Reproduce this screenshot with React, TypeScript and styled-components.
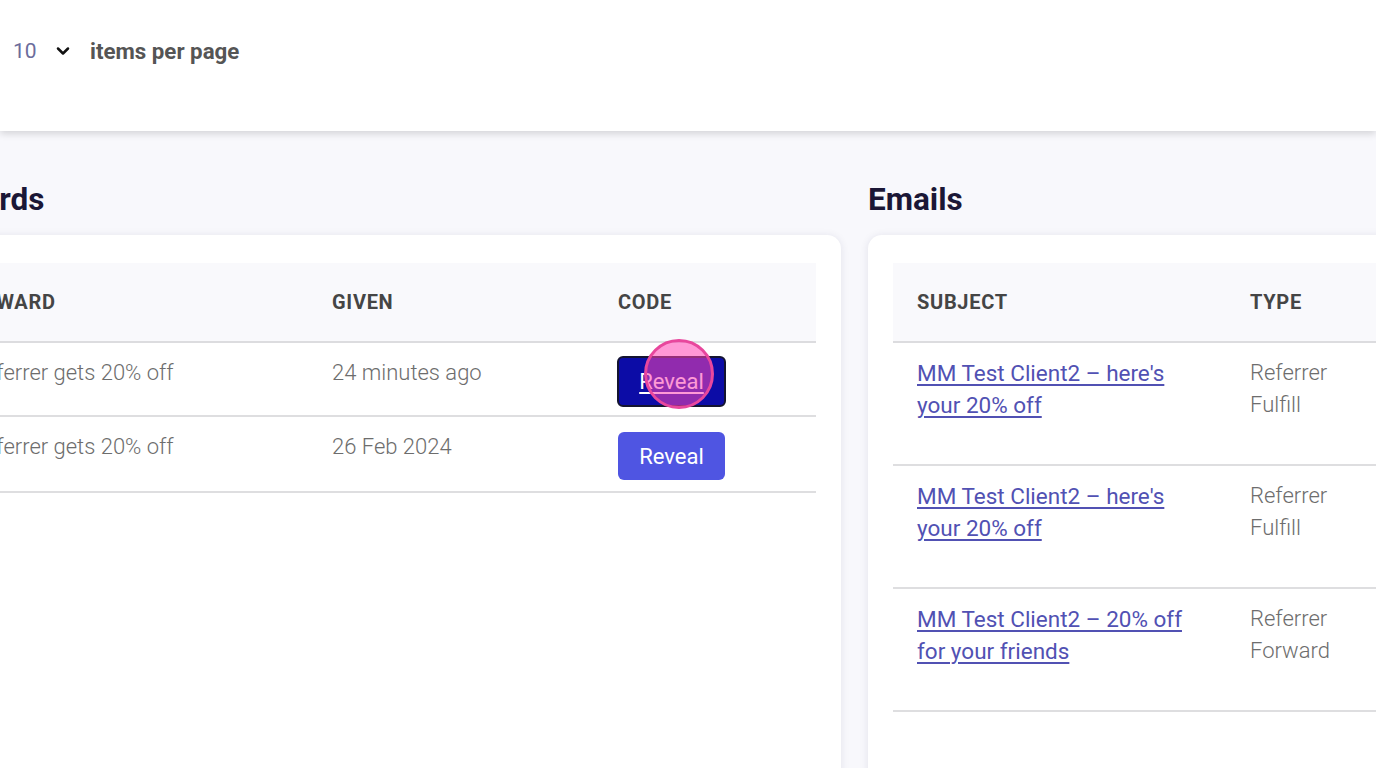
import styled, { createGlobalStyle } from "styled-components";

const GlobalStyle = createGlobalStyle`
    html, body {
        margin: 0;
        padding: 0;
        background: #f8f8fc;
        font-family: Roboto, "Liberation Sans", sans-serif;
        overflow: hidden;
    }
`;

const Page = styled.div`
    width: 1376px;
    height: 768px;
    overflow: hidden;
    background: #f8f8fc;
`;

const TopBar = styled.div`
    height: 131px;
    box-sizing: border-box;
    padding: 35px 0 0 13px;
    background: #ffffff;
    box-shadow: 0 3px 7px rgba(0, 0, 0, 0.14);
    display: flex;
    align-items: flex-start;
    position: relative;
    z-index: 1;
`;

const PerPage = styled.div`
    display: flex;
    align-items: center;
    height: 32px;
`;

const PageCount = styled.span`
    font-size: 21px;
    font-weight: 400;
    color: #6c6c9c;
    width: 40px;
`;

const Chevron = styled.svg`
    width: 20px;
    height: 20px;
    margin-right: 17px;
`;

const PerPageLabel = styled.span`
    font-size: 22.3px;
    font-weight: 700;
    color: #555555;
`;

const Columns = styled.div`
    display: grid;
    grid-template-columns: 919px 915px;
    gap: 27px;
    margin-left: -78px;
    padding-top: 51px;
`;

const Section = styled.section`
    display: flex;
    flex-direction: column;
`;

const Heading = styled.h2`
    margin: 0 0 17px 0;
    font-size: 31.5px;
    line-height: 36px;
    font-weight: 700;
    color: #1b1736;
`;

const Card = styled.div`
    background: #ffffff;
    border-radius: 14px;
    box-shadow: 0 1px 8px rgba(30, 30, 80, 0.1);
    padding: 28px 25px 0 25px;
    min-height: 520px;
`;

const Table = styled.table`
    width: 100%;
    border-collapse: collapse;
`;

const HeadRow = styled.tr`
    background: #f9f9fc;
    border-bottom: 2px solid #dcdcdf;
`;

const HeadCell = styled.th<{ $w?: number }>`
    height: 78px;
    padding: 0 24px;
    text-align: left;
    font-size: 20px;
    font-weight: 700;
    letter-spacing: 0.7px;
    color: #454545;
    width: ${(p) => (p.$w ? `${p.$w}px` : "auto")};
`;

const Row = styled.tr`
    border-bottom: 2px solid #dedee0;
`;

const Cell = styled.td<{ $bottom?: number }>`
    vertical-align: top;
    padding: 14px 24px ${(p) => p.$bottom ?? 11}px 24px;
    font-size: 22px;
    line-height: 32px;
    font-weight: 300;
    color: #6d6d6d;
`;

const SubjectCell = styled(Cell)`
    font-size: 22.5px;
`;

const SubjectLink = styled.a`
    color: #5151b3;
    font-weight: 400;
    text-decoration: underline;
    text-underline-offset: 3px;
`;

const ButtonWrap = styled.div`
    position: relative;
    display: inline-block;
`;

const RevealButton = styled.button<{ $active?: boolean }>`
    width: ${(p) => (p.$active ? "109px" : "107px")};
    height: ${(p) => (p.$active ? "51px" : "48px")};
    margin-top: ${(p) => (p.$active ? "-1px" : "1px")};
    margin-left: ${(p) => (p.$active ? "-1px" : "0")};
    border-radius: 6px;
    border: ${(p) => (p.$active ? "2px solid #141430" : "none")};
    background: ${(p) => (p.$active ? "#0c0ca6" : "#4f55e2")};
    color: #ffffff;
    font-family: Roboto, "Liberation Sans", sans-serif;
    font-size: 22px;
    font-weight: 400;
    text-decoration: ${(p) => (p.$active ? "underline" : "none")};
    text-underline-offset: 3px;
    cursor: pointer;
`;

const ClickMarker = styled.span`
    position: absolute;
    left: 26px;
    top: -18px;
    width: 64px;
    height: 64px;
    border-radius: 50%;
    background: rgba(255, 70, 180, 0.55);
    border: 3px solid #e8479d;
    pointer-events: none;
`;

const rewards = [
    { reward: "Referrer gets 20% off", given: "24 minutes ago", active: true },
    { reward: "Referrer gets 20% off", given: "26 Feb 2024", active: false },
];

const emails = [
    { subject: ["MM Test Client2 – here's", "your 20% off"], type: ["Referrer", "Fulfill"] },
    { subject: ["MM Test Client2 – here's", "your 20% off"], type: ["Referrer", "Fulfill"] },
    { subject: ["MM Test Client2 – 20% off", "for your friends"], type: ["Referrer", "Forward"] },
];

const App = () => {
    return (
        <Page>
            <GlobalStyle />
            <TopBar>
                <PerPage>
                    <PageCount>10</PageCount>
                    <Chevron viewBox="0 0 24 24" fill="none" stroke="#111" strokeWidth="3" strokeLinecap="round" strokeLinejoin="round">
                        <path d="M6 9l6 6 6-6" />
                    </Chevron>
                    <PerPageLabel>items per page</PerPageLabel>
                </PerPage>
            </TopBar>
            <Columns>
                <Section>
                    <Heading>Rewards</Heading>
                    <Card>
                        <Table>
                            <thead>
                                <HeadRow>
                                    <HeadCell $w={313}>REWARD</HeadCell>
                                    <HeadCell $w={238}>GIVEN</HeadCell>
                                    <HeadCell>CODE</HeadCell>
                                </HeadRow>
                            </thead>
                            <tbody>
                                {rewards.map((r, i) => (
                                    <Row key={i}>
                                        <Cell $bottom={i === 0 ? 8 : 11}>{r.reward}</Cell>
                                        <Cell $bottom={i === 0 ? 8 : 11}>{r.given}</Cell>
                                        <Cell $bottom={i === 0 ? 8 : 11}>
                                            <ButtonWrap>
                                                <RevealButton $active={r.active}>Reveal</RevealButton>
                                                {r.active && <ClickMarker />}
                                            </ButtonWrap>
                                        </Cell>
                                    </Row>
                                ))}
                            </tbody>
                        </Table>
                    </Card>
                </Section>
                <Section>
                    <Heading>Emails</Heading>
                    <Card>
                        <Table>
                            <thead>
                                <HeadRow>
                                    <HeadCell $w={285}>SUBJECT</HeadCell>
                                    <HeadCell>TYPE</HeadCell>
                                </HeadRow>
                            </thead>
                            <tbody>
                                {emails.map((e, i) => (
                                    <Row key={i}>
                                        <SubjectCell $bottom={43}>
                                            <SubjectLink href="#">
                                                {e.subject[0]}
                                                <br />
                                                {e.subject[1]}
                                            </SubjectLink>
                                        </SubjectCell>
                                        <Cell $bottom={43}>
                                            {e.type[0]}
                                            <br />
                                            {e.type[1]}
                                        </Cell>
                                    </Row>
                                ))}
                            </tbody>
                        </Table>
                    </Card>
                </Section>
            </Columns>
        </Page>
    );
};

export default App;
